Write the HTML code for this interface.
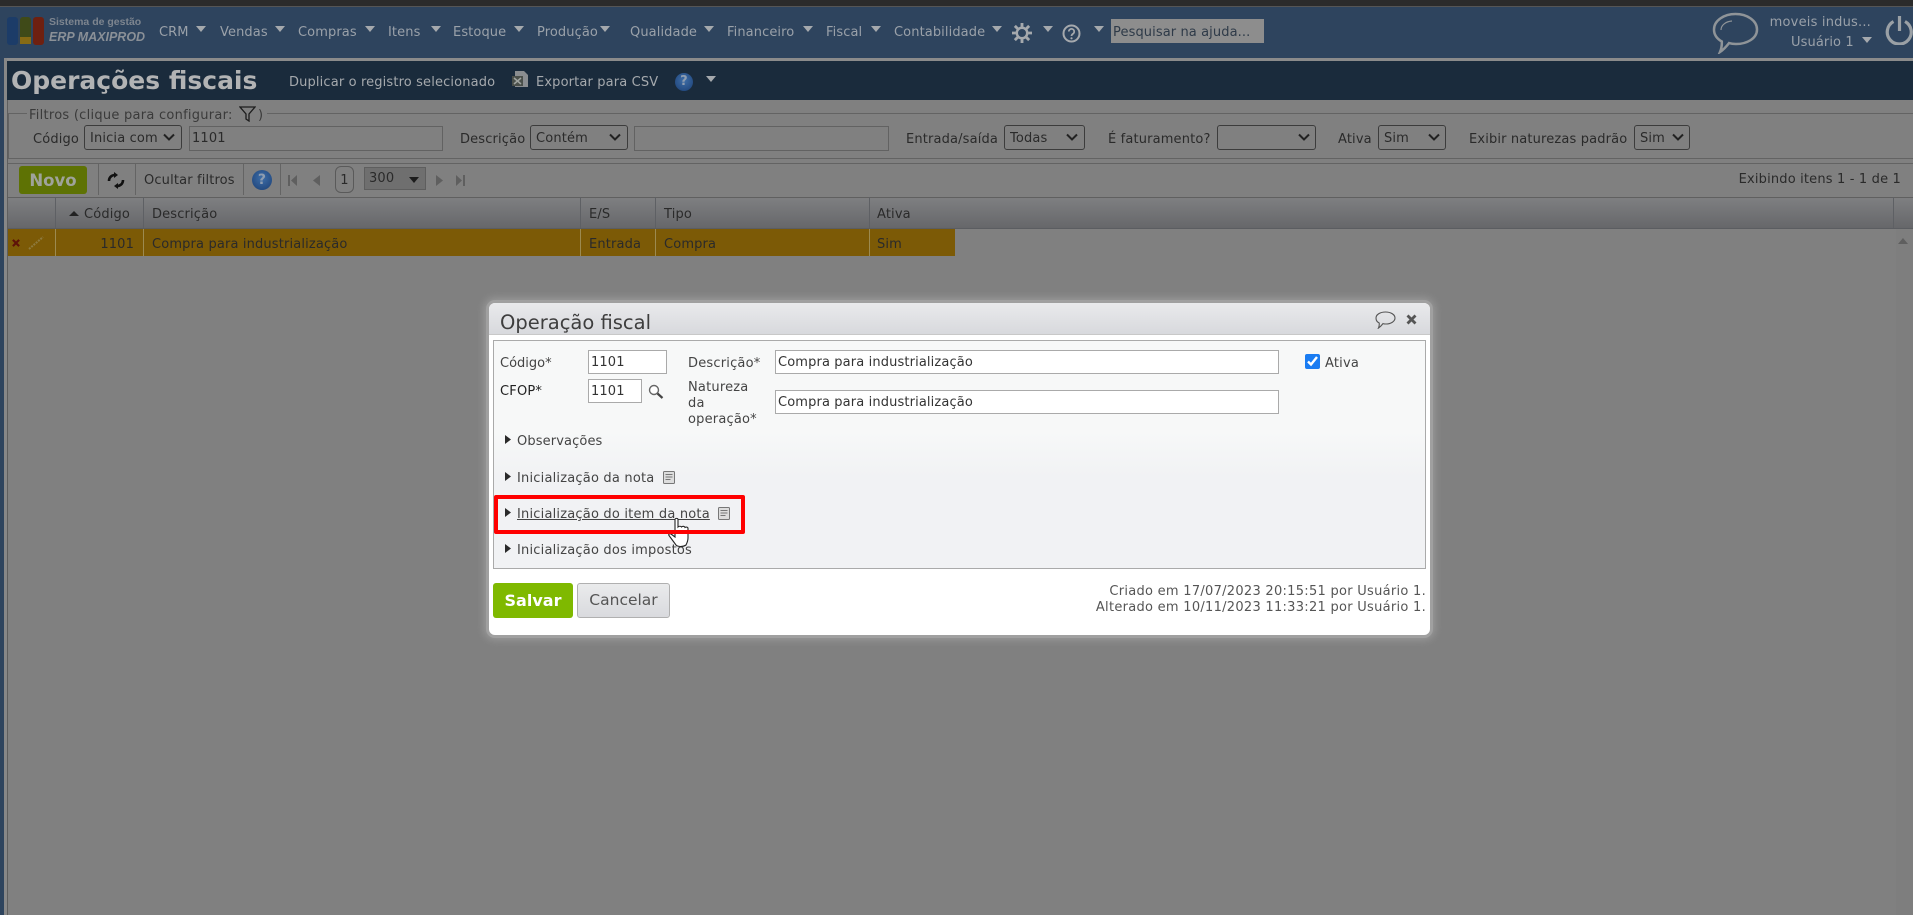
<!DOCTYPE html>
<html lang="pt-BR"><head><meta charset="utf-8"><title>Operações fiscais</title>
<style>
html,body{margin:0;padding:0;width:1913px;height:915px;overflow:hidden;background:#808080}
body{position:relative;font-family:"DejaVu Sans","Liberation Sans",sans-serif;font-size:13px;letter-spacing:.15px;color:#2a2a2a}
.b{position:absolute}
.t{position:absolute;white-space:nowrap;line-height:16px;height:16px}
.nav{color:#9aa1a9;font-size:13px;letter-spacing:.1px}
.down{position:absolute;width:10px;height:6px;background:#a5a9ad;clip-path:polygon(0 0,100% 0,50% 100%)}
select{position:absolute;box-sizing:border-box;font:13px "DejaVu Sans",sans-serif;letter-spacing:.15px;color:#2a2a2a;background:#808080;border:1px solid #3c3c3c;border-radius:3px;padding:2px 0 0 5px;margin:0;height:25px;appearance:none;-webkit-appearance:none}
.chev{position:absolute;top:133px}
input.f{position:absolute;box-sizing:border-box;font:13px "DejaVu Sans",sans-serif;letter-spacing:.15px;color:#2a2a2a;background:transparent;border:1px solid #626262;padding:0 2px;margin:0;height:25px;outline:0}
input.m{position:absolute;box-sizing:border-box;font:13px "DejaVu Sans",sans-serif;letter-spacing:.13px;color:#333;background:#fff;border:1px solid #aaa;padding:0 2px;margin:0;height:24px;outline:0}
.sep{position:absolute;width:1px;background:#646464;top:164px;height:31px}
.col{position:absolute;width:1px;background:#5e6064;top:197px;height:31px}
.rc{position:absolute;width:1px;background:#9c8a50;top:229px;height:27px}
.tri{position:absolute;width:6px;height:9px;background:#2a2a2a;clip-path:polygon(0 0,100% 50%,0 100%)}
.d{color:#444;font-size:13px;letter-spacing:.2px}
</style></head><body>

<div class="b" style="left:0;top:0;width:1913px;height:6px;background:#2b2b2b"></div>
<div class="b" style="left:0;top:6px;width:1913px;height:1px;background:#555"></div>
<div class="b" style="left:0;top:7px;width:1913px;height:51px;background:#2e445e"></div>
<div class="b" style="left:0;top:58px;width:4px;height:857px;background:#2e445e"></div>
<div class="b" style="left:4px;top:58px;width:1909px;height:3px;background:#8b8b8b"></div>
<div class="b" style="left:4px;top:58px;width:3px;height:857px;background:#878787"></div>
<div class="b" style="left:7px;top:100px;width:1px;height:815px;background:#5e5e5e"></div>

<!-- logo -->
<div class="b" style="left:7px;top:17px;width:11px;height:28px;background:#1c3c68;border-radius:3px"></div>
<div class="b" style="left:20px;top:17px;width:11px;height:20px;background:#3f4a18;border-radius:3px 3px 0 0"></div>
<div class="b" style="left:20px;top:37px;width:11px;height:7px;background:#866a14"></div>
<div class="b" style="left:33px;top:17px;width:11px;height:28px;background:#6e2010;border-radius:3px"></div>
<div class="t" style="left:49px;top:14px;font-size:10.500px;font-weight:bold;color:#7d858f;font-family:'Liberation Sans',sans-serif;letter-spacing:0">Sistema de gestão</div>
<div class="t" style="left:49px;top:29px;font-size:12.500px;font-weight:bold;font-style:italic;color:#8a9097;font-family:'Liberation Sans',sans-serif;letter-spacing:0">ERP MAXIPROD</div>

<!-- nav -->
<div class="t nav" style="left:159px;top:25px">CRM</div><div class="down" style="left:196px;top:26px"></div>
<div class="t nav" style="left:220px;top:25px">Vendas</div><div class="down" style="left:275px;top:26px"></div>
<div class="t nav" style="left:298px;top:25px">Compras</div><div class="down" style="left:365px;top:26px"></div>
<div class="t nav" style="left:388px;top:25px">Itens</div><div class="down" style="left:431px;top:26px"></div>
<div class="t nav" style="left:453px;top:25px">Estoque</div><div class="down" style="left:514px;top:26px"></div>
<div class="t nav" style="left:537px;top:25px">Produção</div><div class="down" style="left:600px;top:26px"></div>
<div class="t nav" style="left:630px;top:25px">Qualidade</div><div class="down" style="left:704px;top:26px"></div>
<div class="t nav" style="left:727px;top:25px">Financeiro</div><div class="down" style="left:803px;top:26px"></div>
<div class="t nav" style="left:826px;top:25px">Fiscal</div><div class="down" style="left:871px;top:26px"></div>
<div class="t nav" style="left:894px;top:25px">Contabilidade</div><div class="down" style="left:992px;top:26px"></div>
<svg class="b" style="left:1012px;top:23px" width="20" height="20" viewBox="0 0 21 21"><circle cx="10.5" cy="10.5" r="5.5" fill="none" stroke="#a5a9ad" stroke-width="2.600"/><g stroke="#a5a9ad" stroke-width="3"><path d="M10.5 0v4M10.5 17v4M0 10.500h4M17 10.500h4M3 3l3 3M15 15l3 3M18 3l-3 3M6 15l-3 3"/></g></svg>
<div class="down" style="left:1043px;top:26px"></div>
<svg class="b" style="left:1062px;top:24px" width="19" height="19" viewBox="0 0 19 19"><circle cx="9.500" cy="9.500" r="8" fill="none" stroke="#a5a9ad" stroke-width="2"/><path d="M6.800 7.500a2.700 2.700 0 1 1 4.200 2.300c-1 .7-1.500 1-1.500 2.200" fill="none" stroke="#a5a9ad" stroke-width="1.700"/><circle cx="9.500" cy="14.300" r="1.100" fill="#a5a9ad"/></svg>
<div class="down" style="left:1094px;top:26px"></div>
<div class="b" style="left:1111px;top:19px;width:153px;height:24px;background:#8d8d8d"></div>
<div class="t" style="left:1113px;top:25px;font-size:13px;letter-spacing:.1px;color:#2e3a48">Pesquisar na ajuda...</div>

<svg class="b" style="left:1712px;top:12px" width="47" height="42" viewBox="0 0 47 42"><path d="M23.500 2C35 2 45 8.500 45 17.500S35 32 24 32c-3 0-5-.3-7-.9C14 35 11 38 8 40c1.500-3.500 2-6.500 1.800-10.500C4.500 26.500 2 22.500 2 17.500 2 8.500 12 2 23.500 2z" fill="none" stroke="#8f9498" stroke-width="2.500"/><path d="M9 18c0-5 5-8.500 11-9" fill="none" stroke="#8f9498" stroke-width="1.200"/></svg>
<div class="t" style="left:1740px;top:15px;font-size:13px;letter-spacing:.2px;color:#9aa1a9;width:131px;text-align:right">moveis indus...</div>
<div class="t" style="left:1791px;top:35px;font-size:13px;letter-spacing:.1px;color:#9aa1a9">Usuário 1</div>
<div class="down" style="left:1862px;top:37px"></div>
<svg class="b" style="left:1885px;top:14px" width="28" height="31" viewBox="0 0 28 31"><path d="M8.500 7.500A12 12 0 1 0 20 7.500" fill="none" stroke="#9aa0a5" stroke-width="3.200"/><path d="M14.500 2v15" stroke="#9aa0a5" stroke-width="3.200"/></svg>

<!-- title bar -->
<div class="b" style="left:7px;top:61px;width:1906px;height:39px;background:#1a2b3c"></div>
<div class="t" style="left:11px;top:67px;height:28px;line-height:28px;font-size:25px;font-weight:bold;letter-spacing:0;color:#b2b3b4">Operações fiscais</div>
<div class="t" style="left:289px;top:75px;color:#a5a9ad;font-size:13px;letter-spacing:.14px">Duplicar o registro selecionado</div>
<svg class="b" style="left:511px;top:70px" width="20" height="19" viewBox="0 0 20 19"><path d="M4 1h9l4 4v12H4z" fill="#8a8d90"/><rect x="1" y="6" width="11" height="10" fill="#4a4f4a"/><path d="M3 8l7 6M10 8l-7 6" stroke="#a0a4a0" stroke-width="1.500"/></svg>
<div class="t" style="left:536px;top:75px;color:#a5a9ad;font-size:13px;letter-spacing:.14px">Exportar para CSV</div>
<div class="b" style="left:675px;top:73px;width:18px;height:18px;border-radius:50%;background:radial-gradient(circle at 50% 40%,#3e6ea8,#1b3f74);color:#8e9db0;font-size:13px;font-weight:bold;text-align:center;line-height:18px">?</div>
<div class="down" style="left:706px;top:76px"></div>

<!-- filters -->
<div class="b" style="left:8px;top:113px;width:1905px;height:46px;box-sizing:border-box;border:1px solid #636363;border-right:0;background:#808080"></div>
<div class="b" style="left:27px;top:108px;width:240px;height:12px;background:#808080"></div>
<div class="t" style="left:29px;top:108px;color:#3a3a3a;font-size:13px;letter-spacing:.26px">Filtros (clique para configurar:</div>
<svg class="b" style="left:239px;top:106px" width="17" height="16" viewBox="0 0 17 16"><path d="M1 1h15L10 8v7l-3-2V8z" fill="none" stroke="#1c1c1c" stroke-width="1.300"/></svg>
<div class="t" style="left:258px;top:108px;color:#3a3a3a">)</div>

<div class="t" style="left:33px;top:132px">Código</div>
<select style="left:84px;top:125px;width:98px"><option>Inicia com</option></select>
<svg class="chev" style="left:163px" width="12" height="8" viewBox="0 0 12 8"><path d="M1 1.500l5 5 5-5" fill="none" stroke="#222" stroke-width="2"/></svg>
<input class="f" style="left:189px;top:126px;width:254px" value="1101">
<div class="t" style="left:460px;top:132px">Descrição</div>
<select style="left:530px;top:125px;width:98px"><option>Contém</option></select>
<svg class="chev" style="left:609px" width="12" height="8" viewBox="0 0 12 8"><path d="M1 1.500l5 5 5-5" fill="none" stroke="#222" stroke-width="2"/></svg>
<input class="f" style="left:634px;top:126px;width:255px">
<div class="t" style="left:906px;top:132px">Entrada/saída</div>
<select style="left:1004px;top:125px;width:81px"><option>Todas</option></select>
<svg class="chev" style="left:1066px" width="12" height="8" viewBox="0 0 12 8"><path d="M1 1.500l5 5 5-5" fill="none" stroke="#222" stroke-width="2"/></svg>
<div class="t" style="left:1108px;top:132px">É faturamento?</div>
<select style="left:1217px;top:125px;width:99px"><option></option></select>
<svg class="chev" style="left:1298px" width="12" height="8" viewBox="0 0 12 8"><path d="M1 1.500l5 5 5-5" fill="none" stroke="#222" stroke-width="2"/></svg>
<div class="t" style="left:1338px;top:132px">Ativa</div>
<select style="left:1378px;top:125px;width:68px"><option>Sim</option></select>
<svg class="chev" style="left:1428px" width="12" height="8" viewBox="0 0 12 8"><path d="M1 1.500l5 5 5-5" fill="none" stroke="#222" stroke-width="2"/></svg>
<div class="t" style="left:1469px;top:132px">Exibir naturezas padrão</div>
<select style="left:1634px;top:125px;width:56px"><option>Sim</option></select>
<svg class="chev" style="left:1672px" width="12" height="8" viewBox="0 0 12 8"><path d="M1 1.500l5 5 5-5" fill="none" stroke="#222" stroke-width="2"/></svg>

<!-- toolbar -->
<div class="b" style="left:8px;top:163px;width:1905px;height:1px;background:#636363"></div>
<div class="b" style="left:19px;top:166px;width:68px;height:28px;background:#5e7204;border-radius:3px;color:#9fa39b;font-size:16.500px;letter-spacing:0;font-weight:bold;text-align:center;line-height:30px">Novo</div>
<div class="sep" style="left:98px"></div>
<svg class="b" style="left:107px;top:172px" width="19" height="17" viewBox="0 0 19 17"><path d="M2 9c0-4 3-6 6-6M16 8c0 4-3 6-6 6" fill="none" stroke="#111" stroke-width="2.600"/><path d="M7 0l4 3-4 3zM11 11l-4 3 4 3z" fill="#111"/></svg>
<div class="sep" style="left:135px"></div>
<div class="t" style="left:144px;top:173px">Ocultar filtros</div>
<div class="sep" style="left:243px"></div>
<div class="b" style="left:252px;top:170px;width:20px;height:20px;border-radius:50%;background:radial-gradient(circle at 50% 40%,#3e6ea8,#1b3f74);color:#8e9db0;font-size:14px;font-weight:bold;text-align:center;line-height:20px">?</div>
<div class="sep" style="left:280px"></div>
<svg class="b" style="left:288px;top:175px" width="9" height="11" viewBox="0 0 9 11"><path d="M0 0h2v11H0zM9 0v11L3 5.500z" fill="#5f5f5f"/></svg>
<svg class="b" style="left:313px;top:175px" width="7" height="11" viewBox="0 0 7 11"><path d="M7 0v11L0 5.500z" fill="#5f5f5f"/></svg>
<div class="b" style="left:335px;top:166px;width:19px;height:27px;box-sizing:border-box;border:1px solid #5a5a5a;border-radius:6px;text-align:center;line-height:27px">1</div>
<div class="b" style="left:364px;top:167px;width:62px;height:23px;box-sizing:border-box;border:1px solid #5e5e5e;background:#6f6f6f"></div>
<div class="t" style="left:369px;top:171px">300</div>
<div class="b" style="left:409px;top:177px;width:10px;height:6px;background:#1c1c1c;clip-path:polygon(0 0,100% 0,50% 100%)"></div>
<svg class="b" style="left:436px;top:175px" width="7" height="11" viewBox="0 0 7 11"><path d="M0 0v11l7-5.500z" fill="#5f5f5f"/></svg>
<svg class="b" style="left:456px;top:175px" width="9" height="11" viewBox="0 0 9 11"><path d="M0 0v11l6-5.500zM7 0h2v11H7z" fill="#5f5f5f"/></svg>
<div class="t" style="left:1737px;top:172px;width:164px;text-align:right;letter-spacing:.17px;white-space:nowrap">Exibindo itens 1 - 1 de 1</div>

<!-- grid -->
<div class="b" style="left:8px;top:197px;width:1905px;height:31px;background:linear-gradient(#7e7f81,#66676a);border-top:1px solid #606060;box-sizing:border-box"></div>
<div class="b" style="left:8px;top:228px;width:1905px;height:1px;background:#5b5d61"></div>
<div class="col" style="left:55px"></div><div class="col" style="left:143px"></div><div class="col" style="left:580px"></div><div class="col" style="left:655px"></div><div class="col" style="left:869px"></div><div class="col" style="left:1893px"></div>
<div class="b" style="left:69px;top:211px;width:10px;height:5px;background:#222;clip-path:polygon(50% 0,100% 100%,0 100%)"></div>
<div class="t" style="left:84px;top:207px">Código</div>
<div class="t" style="left:152px;top:207px">Descrição</div>
<div class="t" style="left:589px;top:207px">E/S</div>
<div class="t" style="left:664px;top:207px">Tipo</div>
<div class="t" style="left:877px;top:207px">Ativa</div>
<div class="b" style="left:8px;top:229px;width:947px;height:27px;background:#7c5a06"></div>
<div class="rc" style="left:55px"></div><div class="rc" style="left:143px"></div><div class="rc" style="left:580px"></div><div class="rc" style="left:655px"></div><div class="rc" style="left:869px"></div>
<svg class="b" style="left:12px;top:239px" width="8" height="8" viewBox="0 0 9 9"><path d="M1 1l7 7M8 1L1 8" stroke="#5e1208" stroke-width="2.400"/></svg>
<svg class="b" style="left:28px;top:236px" width="16" height="14" viewBox="0 0 16 14"><path d="M1 13L15 1" stroke="#8e7a3e" stroke-width="2" stroke-dasharray="2 1"/></svg>
<div class="t" style="left:84px;top:237px;width:50px;text-align:right">1101</div>
<div class="t" style="left:152px;top:237px">Compra para industrialização</div>
<div class="t" style="left:589px;top:237px">Entrada</div>
<div class="t" style="left:664px;top:237px">Compra</div>
<div class="t" style="left:877px;top:237px">Sim</div>
<div class="b" style="left:1896px;top:229px;width:17px;height:686px;background:#7e7e7e"></div>
<div class="b" style="left:1898px;top:238px;width:10px;height:6px;background:#5f5f5f;clip-path:polygon(50% 0,100% 100%,0 100%)"></div>

<!-- dialog -->
<div class="b" style="left:489px;top:303px;width:941px;height:332px;background:#fff;border-radius:6px;box-shadow:0 0 0 3px #a0a0a0,0 0 8px 5px #999"></div>
<div class="b" style="left:489px;top:303px;width:941px;height:32px;background:linear-gradient(#e9eaec,#d8d9dd);border-radius:6px 6px 0 0;border-bottom:1px solid #c8c8c8;box-sizing:border-box"></div>
<div class="t" style="left:500px;top:312px;height:22px;line-height:22px;font-size:19.500px;letter-spacing:0;color:#3e3e3e">Operação fiscal</div>
<svg class="b" style="left:1375px;top:311px" width="21" height="18" viewBox="0 0 21 18"><path d="M10.500 1C16 1 20 3.700 20 7s-4 6-9 6c-1.200 0-2.300-.1-3-.4C6.500 14.500 5 16 3.500 17c.8-1.700.9-3 .7-5C2 11 1 9 1 7c0-3.300 4-6 9.500-6z" fill="none" stroke="#555" stroke-width="1.100"/></svg>
<svg class="b" style="left:1406px;top:314px" width="11" height="11" viewBox="0 0 11 11"><path d="M1.500 1.500l8 8M9.500 1.500l-8 8" stroke="#555" stroke-width="2.800"/></svg>

<div class="b" style="left:493px;top:340px;width:933px;height:229px;box-sizing:border-box;border:1px solid #aaa;background:linear-gradient(#f7f8f8 0,#f7f8f8 40%,#f1f2f4 60%,#f1f2f4 100%)"></div>

<div class="t d" style="left:500px;top:356px;letter-spacing:0">Código*</div>
<input class="m" style="left:588px;top:350px;width:79px" value="1101">
<div class="t d" style="left:688px;top:356px">Descrição*</div>
<input class="m" style="left:775px;top:350px;width:504px" value="Compra para industrialização">
<input type="checkbox" checked style="position:absolute;left:1305px;top:354px;width:15px;height:15px;margin:0;accent-color:#1a7cf2">
<div class="t d" style="left:1325px;top:356px">Ativa</div>
<div class="t d" style="left:500px;top:384px;color:#222">CFOP*</div>
<input class="m" style="left:588px;top:379px;width:54px" value="1101">
<svg class="b" style="left:648px;top:384px" width="16" height="15" viewBox="0 0 16 15"><circle cx="6" cy="6" r="4.500" fill="#fff" stroke="#666" stroke-width="1.400"/><path d="M9.500 9.500L14.500 14" stroke="#444" stroke-width="2.200"/></svg>
<div class="t d" style="left:688px;top:380px">Natureza</div>
<div class="t d" style="left:688px;top:396px">da</div>
<div class="t d" style="left:688px;top:412px">operação*</div>
<input class="m" style="left:775px;top:390px;width:504px" value="Compra para industrialização">

<div class="tri" style="left:505px;top:435px"></div>
<div class="t d" style="left:517px;top:434px;letter-spacing:.12px">Observações</div>
<div class="tri" style="left:505px;top:472px"></div>
<div class="t d" style="left:517px;top:471px">Inicialização da nota</div>
<svg class="b" style="left:663px;top:471px" width="12" height="13" viewBox="0 0 12 13"><rect x=".5" y=".5" width="11" height="12" rx="1" fill="#ddd" stroke="#777"/><path d="M2.500 3.500h7M2.500 6h7M2.500 8.500h5" stroke="#777"/></svg>
<div class="tri" style="left:505px;top:508px"></div>
<div class="t d" style="left:517px;top:507px;text-decoration:underline">Inicialização do item da nota</div>
<svg class="b" style="left:718px;top:507px" width="12" height="13" viewBox="0 0 12 13"><rect x=".5" y=".5" width="11" height="12" rx="1" fill="#ddd" stroke="#777"/><path d="M2.500 3.500h7M2.500 6h7M2.500 8.500h5" stroke="#777"/></svg>
<div class="tri" style="left:505px;top:544px"></div>
<div class="t d" style="left:517px;top:543px">Inicialização dos impostos</div>

<!-- hand cursor -->
<svg class="b" style="left:668px;top:517px" width="25" height="31" viewBox="0 0 25 31"><path d="M7 12V2.500C7 1 10 1 10 2.500V10c1-1 3-1 3.500 0 1-1 3-1 3.500.5 1-.8 3-.5 3 1V21c0 3-1 5-2 7-3 2-8 2-10 0L1 18.500c-.8-1 .5-2.500 2-1.500l4 3z" fill="#fff" stroke="#222" stroke-width="1.100"/></svg>

<div class="b" style="left:494px;top:495px;width:251px;height:39px;box-sizing:border-box;border:4px solid #f00;border-radius:2px"></div>

<div class="b" style="left:493px;top:583px;width:80px;height:35px;background:#7fb900;border-radius:3px;color:#fff;font-size:16px;letter-spacing:0;font-weight:bold;text-align:center;line-height:35px">Salvar</div>
<div class="b" style="left:577px;top:583px;width:93px;height:35px;box-sizing:border-box;background:linear-gradient(#eaebec,#d9dade);border:1px solid #b0b0b0;border-radius:3px;color:#555;font-size:15.500px;letter-spacing:0;text-align:center;line-height:33px">Cancelar</div>
<div class="t d" style="left:1000px;width:426px;text-align:right;top:584px;color:#555;letter-spacing:.28px">Criado em 17/07/2023 20:15:51 por Usuário 1.</div>
<div class="t d" style="left:1000px;width:426px;text-align:right;top:600px;color:#555;letter-spacing:.28px">Alterado em 10/11/2023 11:33:21 por Usuário 1.</div>

</body></html>
